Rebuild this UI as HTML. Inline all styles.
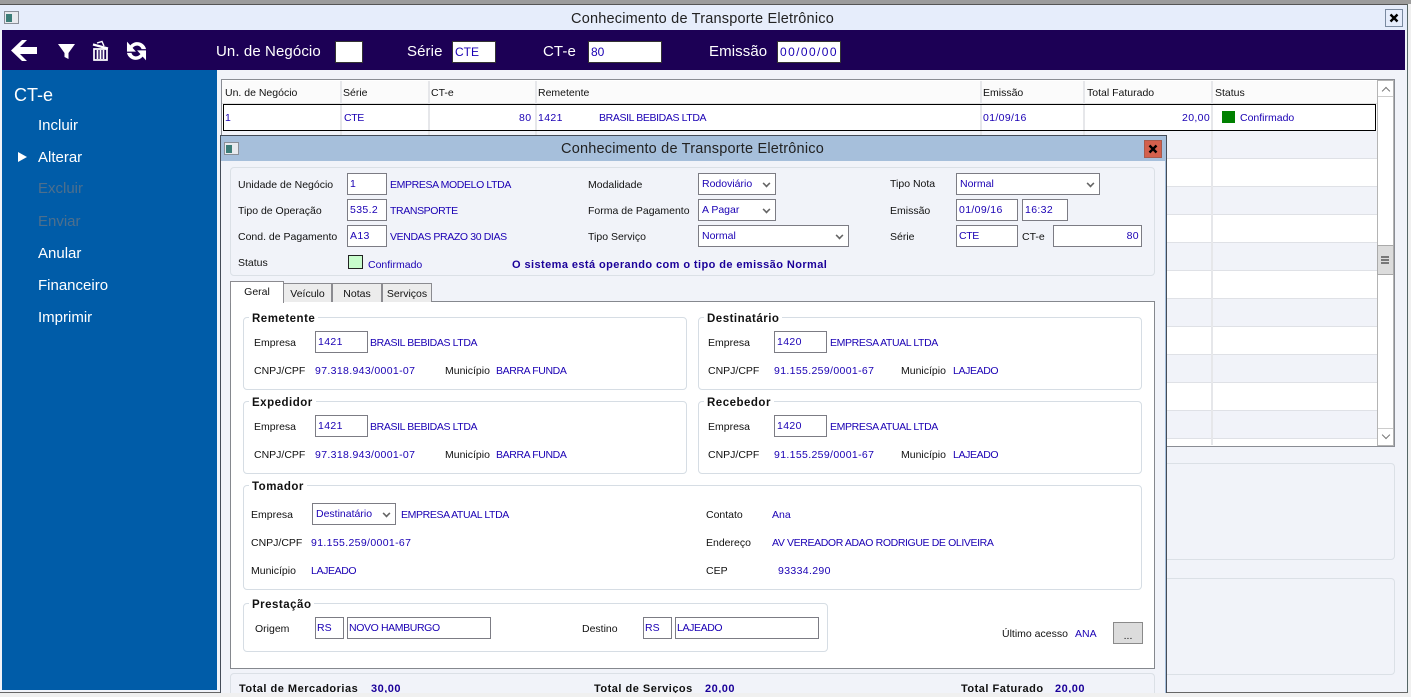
<!DOCTYPE html>
<html><head><meta charset="utf-8"><style>
html,body{margin:0;padding:0;width:1411px;height:697px;overflow:hidden;background:#f0f0f0;font-family:"Liberation Sans",sans-serif;font-size:10.500px;color:#111}
div,span{position:absolute;box-sizing:border-box}
.t{white-space:nowrap;line-height:14px;height:14px;margin-top:1px}
.b{color:#1a00b4}
.u{letter-spacing:-.38px}
.n{letter-spacing:.35px}
.h{font-weight:bold;color:#111;background:#fff;padding:0 3px;font-size:11.500px;letter-spacing:.5px}
.i{background:#fff;border:1px solid #7c7c84;color:#1a00b4;white-space:nowrap;line-height:21px;padding-left:2px}
.s:after{content:"";position:absolute;right:5px;top:6px;width:5px;height:5px;border-right:2px solid #666;border-bottom:2px solid #666;transform:rotate(45deg) scale(.8)}
.g{background:#fff;border:1px solid #d6dde4;border-radius:4px}
.r{left:222px;width:1155px;height:28px;border-bottom:1px solid #dfe1e6}
.c{top:81px;height:364px;width:2px;background:#e6e7ea}
.m{left:38px;font-size:15px;color:#fff;white-space:nowrap;line-height:18px;height:18px;margin-top:1px}
.tb{top:42px;font-size:15px;color:#fff;white-space:nowrap;line-height:20px;letter-spacing:.1px}
.ti{top:41px;height:22px;background:#fff;border:1px solid #333;color:#1a00b4;font-size:12px;line-height:20px;padding-left:2px}
.tab{background:#ececec;border:1px solid #8b8b90;border-bottom:0;text-align:center;line-height:21px}
.bd{font-weight:bold;letter-spacing:.5px;font-size:11px}
.bb{font-weight:bold;color:#1a0099;letter-spacing:.5px;font-size:11px}
</style></head><body>
<div style="left:0;top:0;width:1411px;height:4px;background:#9c9c9c"></div>
<div style="left:0;top:4px;width:1408px;height:1px;background:#555"></div>
<div style="left:0;top:5px;width:1407px;height:688px;background:#f1f3f9"></div>
<div style="left:0;top:5px;width:1407px;height:25px;background:#e6edfb"></div>
<div style="left:1407px;top:4px;width:1px;height:689px;background:#566"></div>
<div style="left:0;top:692px;width:1408px;height:1px;background:#666"></div>
<div style="left:4px;top:11px;width:15px;height:13px;background:#e8eaee;border:1px solid #8a8f98"></div>
<div style="left:6px;top:14px;width:6px;height:8px;background:#3c7d78"></div>
<div class="t" style="left:0;width:1405px;top:9px;height:18px;line-height:18px;text-align:center;font-size:14.500px;letter-spacing:.2px;color:#222">Conhecimento de Transporte Eletrônico</div>
<div style="left:1385px;top:9px;width:18px;height:18px;border:1px solid #7a8aa0;background:#e6edfb"></div>
<svg style="position:absolute;left:1385px;top:9px" width="18" height="18"><path d="M5.500 5.500L12.500 12.500M12.500 5.500L5.500 12.500" stroke="#000" stroke-width="2.400"/></svg>

<div style="left:2px;top:30px;width:1403px;height:40px;background:#1c0055"></div>
<svg style="position:absolute;left:0;top:30px" width="160" height="40" viewBox="0 0 160 40">
<path d="M11 20.500L22 10H27L20 17H37V24H20L27 31H22Z" fill="#fff"/>
<path d="M58 14H75L68.500 23V29L64.500 27V23Z" fill="#fff"/>
<path d="M93 14.500L108 18.500" stroke="#fff" stroke-width="2.200" fill="none"/>
<path d="M97 13L102 11.500L104 16" stroke="#fff" stroke-width="1.400" fill="none"/>
<path d="M94 19H107V30H94ZM97.500 20V29M100.500 20V29M103.500 20V29" stroke="#fff" stroke-width="1.700" fill="none"/>
<g transform="translate(136.500 21) scale(1.12 1.25) translate(-136.500 -21.500)"><path d="M145 20C144 15 136 12 131 17L128 14V22H136L133 19C136 16 140 17 141 20ZM128 23C129 28 137 31 142 26L145 29V21H137L140 24C137 27 133 26 132 23Z" fill="#fff"/></g>
</svg>
<div class="tb" style="left:216px">Un. de Negócio</div>
<div class="ti" style="left:335px;width:28px"></div>
<div class="tb" style="left:407px">Série</div>
<div class="ti" style="left:452px;width:44px">CTE</div>
<div class="tb" style="left:543px">CT-e</div>
<div class="ti" style="left:588px;width:74px">80</div>
<div class="tb" style="left:709px">Emissão</div>
<div class="ti" style="left:777px;width:64px;letter-spacing:1.400px">00/00/00</div>

<div style="left:2px;top:70px;width:215px;height:620px;background:#005ca8"></div>
<div class="m" style="left:14px;top:84px;font-size:18px;line-height:20px;height:20px">CT-e</div>
<div class="m" style="top:116px">Incluir</div>
<div style="left:18px;top:152px;width:0;height:0;border-left:9px solid #fff;border-top:5px solid transparent;border-bottom:5px solid transparent"></div>
<div class="m" style="top:148px">Alterar</div>
<div class="m" style="top:179px;color:#4d6f8d">Excluir</div>
<div class="m" style="top:212px;color:#4d6f8d">Enviar</div>
<div class="m" style="top:244px">Anular</div>
<div class="m" style="top:276px">Financeiro</div>
<div class="m" style="top:308px">Imprimir</div>

<!-- grid -->
<div style="left:221px;top:79px;width:1174px;height:368px;background:#fff;border:1px solid #8a8d94"></div>
<div style="left:222px;top:81px;width:1155px;height:23px;background:#fbfbfb;border-bottom:1px solid #e0e0e0"></div>
<div class="r" style="top:131px;background:#f1f3f9"></div>
<div class="r" style="top:159px"></div>
<div class="r" style="top:187px;background:#f1f3f9"></div>
<div class="r" style="top:215px"></div>
<div class="r" style="top:243px;background:#f1f3f9"></div>
<div class="r" style="top:271px"></div>
<div class="r" style="top:299px;background:#f1f3f9"></div>
<div class="r" style="top:327px"></div>
<div class="r" style="top:355px;background:#f1f3f9"></div>
<div class="r" style="top:383px"></div>
<div class="r" style="top:411px;background:#f1f3f9"></div>
<div class="c" style="left:340px"></div><div class="c" style="left:428px"></div><div class="c" style="left:535px"></div><div class="c" style="left:980px"></div><div class="c" style="left:1083px"></div><div class="c" style="left:1211px"></div>
<div class="t" style="left:225px;top:85px">Un. de Negócio</div>
<div class="t" style="left:343px;top:85px">Série</div>
<div class="t" style="left:431px;top:85px">CT-e</div>
<div class="t" style="left:538px;top:85px">Remetente</div>
<div class="t" style="left:983px;top:85px">Emissão</div>
<div class="t" style="left:1087px;top:85px">Total Faturado</div>
<div class="t" style="left:1215px;top:85px">Status</div>
<div style="left:223px;top:104px;width:1153px;height:27px;background:#fff;border:1px solid #000"></div>
<div class="c" style="left:340px;top:105px;height:25px"></div><div class="c" style="left:428px;top:105px;height:25px"></div><div class="c" style="left:535px;top:105px;height:25px"></div><div class="c" style="left:980px;top:105px;height:25px"></div><div class="c" style="left:1083px;top:105px;height:25px"></div><div class="c" style="left:1211px;top:105px;height:25px"></div>
<div class="t b" style="left:225px;top:110px">1</div>
<div class="t b u" style="left:344px;top:110px">CTE</div>
<div class="t b n" style="left:519px;top:110px">80</div>
<div class="t b n" style="left:538px;top:110px">1421</div>
<div class="t b u" style="left:599px;top:110px">BRASIL BEBIDAS LTDA</div>
<div class="t b n" style="left:983px;top:110px">01/09/16</div>
<div class="t b n" style="left:1182px;top:110px">20,00</div>
<div style="left:1222px;top:111px;width:13px;height:12px;background:#008000"></div>
<div class="t b" style="left:1240px;top:110px">Confirmado</div>
<!-- scrollbar -->
<div style="left:1377px;top:80px;width:17px;height:366px;background:#fff;border:1px solid #b4b4b4"></div>
<div style="left:1378px;top:81px;width:15px;height:16px;background:#fff;border-bottom:1px solid #ccc"></div>
<div style="left:1383px;top:88px;width:6px;height:6px;border-left:1.500px solid #777;border-top:1.500px solid #777;transform:rotate(45deg)"></div>
<div style="left:1377px;top:245px;width:17px;height:30px;background:#dcdcdc;border:1px solid #aaa"></div>
<div style="left:1381px;top:256px;width:8px;height:8px;border-top:2px solid #777;border-bottom:2px solid #777"></div>
<div style="left:1381px;top:259px;width:8px;height:2px;background:#777"></div>
<div style="left:1378px;top:428px;width:15px;height:17px;background:#fff;border-top:1px solid #ccc"></div>
<div style="left:1383px;top:432px;width:6px;height:6px;border-right:1.500px solid #777;border-bottom:1.500px solid #777;transform:rotate(45deg)"></div>

<div style="left:1160px;top:463px;width:235px;height:97px;border:1px solid #dbe0e6;border-radius:4px;background:#f1f3f9"></div>
<div style="left:1160px;top:578px;width:235px;height:97px;border:1px solid #dbe0e6;border-radius:4px;background:#f1f3f9"></div>

<!-- dialog -->
<div style="left:220px;top:135px;width:947px;height:558px;background:#f1f3f9;border:1px solid #444c58;border-bottom:0"></div>
<div style="left:221px;top:136px;width:945px;height:25px;background:#a6bfdb"></div>
<div style="left:1165px;top:161px;width:1px;height:532px;background:#a6bfdb"></div>
<div style="left:224px;top:142px;width:15px;height:13px;background:#e8eaee;border:1px solid #8a8f98"></div>
<div style="left:226px;top:145px;width:6px;height:8px;background:#3c7d78"></div>
<div class="t" style="left:222px;width:941px;top:139px;height:18px;line-height:18px;text-align:center;font-size:14.500px;letter-spacing:.2px;color:#222">Conhecimento de Transporte Eletrônico</div>
<div style="left:1144px;top:140px;width:18px;height:18px;background:#d3604c;border:1px solid #a85a4c"></div>
<svg style="position:absolute;left:1144px;top:140px" width="18" height="18"><path d="M5.500 5.500L12.500 12.500M12.500 5.500L5.500 12.500" stroke="#000" stroke-width="2.400"/></svg>

<div style="left:230px;top:167px;width:925px;height:109px;border:1px solid #dbe0e6;border-radius:4px"></div>
<div class="t" style="left:238px;top:177px">Unidade de Negócio</div>
<div class="i" style="left:347px;top:173px;width:40px;height:22px">1</div>
<div class="t b u" style="left:390px;top:177px">EMPRESA MODELO LTDA</div>
<div class="t" style="left:238px;top:203px">Tipo de Operação</div>
<div class="i n" style="left:347px;top:199px;width:40px;height:22px">535.2</div>
<div class="t b u" style="left:390px;top:203px">TRANSPORTE</div>
<div class="t" style="left:238px;top:229px">Cond. de Pagamento</div>
<div class="i n" style="left:347px;top:225px;width:40px;height:22px">A13</div>
<div class="t b u" style="left:390px;top:229px">VENDAS PRAZO 30 DIAS</div>
<div class="t" style="left:238px;top:255px">Status</div>
<div style="left:348px;top:255px;width:15px;height:14px;background:#c8fccc;border:1px solid #222"></div>
<div class="t b" style="left:368px;top:257px">Confirmado</div>
<div class="t bb" style="left:512px;top:257px;font-size:11px;letter-spacing:.42px">O sistema está operando com o tipo de emissão Normal</div>

<div class="t" style="left:588px;top:177px">Modalidade</div>
<div class="i s" style="left:698px;top:173px;width:78px;height:22px;padding-left:3px">Rodoviário</div>
<div class="t" style="left:588px;top:203px">Forma de Pagamento</div>
<div class="i s" style="left:698px;top:199px;width:78px;height:22px;padding-left:3px">A Pagar</div>
<div class="t" style="left:588px;top:229px">Tipo Serviço</div>
<div class="i s" style="left:698px;top:225px;width:151px;height:22px;padding-left:3px">Normal</div>

<div class="t" style="left:890px;top:176px">Tipo Nota</div>
<div class="i s" style="left:956px;top:173px;width:144px;height:22px;padding-left:3px">Normal</div>
<div class="t" style="left:890px;top:203px">Emissão</div>
<div class="i n" style="left:956px;top:199px;width:62px;height:22px">01/09/16</div>
<div class="i n" style="left:1022px;top:199px;width:46px;height:22px">16:32</div>
<div class="t" style="left:890px;top:229px">Série</div>
<div class="i u" style="left:956px;top:225px;width:62px;height:22px">CTE</div>
<div class="t" style="left:1022px;top:229px">CT-e</div>
<div class="i n" style="left:1053px;top:225px;width:89px;height:22px;text-align:right;padding-right:2px">80</div>

<!-- tabs -->
<div style="left:230px;top:301px;width:925px;height:368px;background:#fff;border:1px solid #85888e"></div>
<div class="tab" style="left:283px;top:283px;width:49px;height:19px">Veículo</div>
<div class="tab" style="left:332px;top:283px;width:50px;height:19px">Notas</div>
<div class="tab" style="left:382px;top:283px;width:50px;height:19px">Serviços</div>
<div class="tab" style="left:230px;top:281px;width:54px;height:22px;background:#fff">Geral</div>

<!-- Remetente -->
<div class="g" style="left:243px;top:317px;width:444px;height:73px"></div>
<div class="t h" style="left:249px;top:311px">Remetente</div>
<div class="t" style="left:254px;top:335px">Empresa</div>
<div class="i n" style="left:315px;top:331px;width:53px;height:22px">1421</div>
<div class="t b u" style="left:370px;top:335px">BRASIL BEBIDAS LTDA</div>
<div class="t" style="left:254px;top:363px">CNPJ/CPF</div>
<div class="t b n" style="left:315px;top:363px">97.318.943/0001-07</div>
<div class="t" style="left:445px;top:363px">Município</div>
<div class="t b u" style="left:496px;top:363px">BARRA FUNDA</div>

<!-- Destinatario -->
<div class="g" style="left:698px;top:317px;width:444px;height:73px"></div>
<div class="t h" style="left:704px;top:311px">Destinatário</div>
<div class="t" style="left:708px;top:335px">Empresa</div>
<div class="i n" style="left:774px;top:331px;width:53px;height:22px">1420</div>
<div class="t b u" style="left:830px;top:335px">EMPRESA ATUAL LTDA</div>
<div class="t" style="left:708px;top:363px">CNPJ/CPF</div>
<div class="t b n" style="left:774px;top:363px">91.155.259/0001-67</div>
<div class="t" style="left:901px;top:363px">Município</div>
<div class="t b u" style="left:953px;top:363px">LAJEADO</div>

<!-- Expedidor -->
<div class="g" style="left:243px;top:401px;width:444px;height:73px"></div>
<div class="t h" style="left:249px;top:395px">Expedidor</div>
<div class="t" style="left:254px;top:419px">Empresa</div>
<div class="i n" style="left:315px;top:415px;width:53px;height:22px">1421</div>
<div class="t b u" style="left:370px;top:419px">BRASIL BEBIDAS LTDA</div>
<div class="t" style="left:254px;top:447px">CNPJ/CPF</div>
<div class="t b n" style="left:315px;top:447px">97.318.943/0001-07</div>
<div class="t" style="left:445px;top:447px">Município</div>
<div class="t b u" style="left:496px;top:447px">BARRA FUNDA</div>

<!-- Recebedor -->
<div class="g" style="left:698px;top:401px;width:444px;height:73px"></div>
<div class="t h" style="left:704px;top:395px">Recebedor</div>
<div class="t" style="left:708px;top:419px">Empresa</div>
<div class="i n" style="left:774px;top:415px;width:53px;height:22px">1420</div>
<div class="t b u" style="left:830px;top:419px">EMPRESA ATUAL LTDA</div>
<div class="t" style="left:708px;top:447px">CNPJ/CPF</div>
<div class="t b n" style="left:774px;top:447px">91.155.259/0001-67</div>
<div class="t" style="left:901px;top:447px">Município</div>
<div class="t b u" style="left:953px;top:447px">LAJEADO</div>

<!-- Tomador -->
<div class="g" style="left:243px;top:485px;width:899px;height:105px"></div>
<div class="t h" style="left:249px;top:479px">Tomador</div>
<div class="t" style="left:251px;top:507px">Empresa</div>
<div class="i s" style="left:312px;top:503px;width:84px;height:22px;padding-left:3px">Destinatário</div>
<div class="t b u" style="left:401px;top:507px">EMPRESA ATUAL LTDA</div>
<div class="t" style="left:251px;top:535px">CNPJ/CPF</div>
<div class="t b n" style="left:311px;top:535px">91.155.259/0001-67</div>
<div class="t" style="left:251px;top:563px">Município</div>
<div class="t b u" style="left:311px;top:563px">LAJEADO</div>
<div class="t" style="left:706px;top:507px">Contato</div>
<div class="t b" style="left:772px;top:507px">Ana</div>
<div class="t" style="left:706px;top:535px">Endereço</div>
<div class="t b u" style="left:772px;top:535px">AV VEREADOR ADAO RODRIGUE DE OLIVEIRA</div>
<div class="t" style="left:706px;top:563px">CEP</div>
<div class="t b n" style="left:778px;top:563px">93334.290</div>

<!-- Prestacao -->
<div class="g" style="left:243px;top:603px;width:585px;height:49px"></div>
<div class="t h" style="left:249px;top:597px">Prestação</div>
<div class="t" style="left:255px;top:621px">Origem</div>
<div class="i" style="left:315px;top:617px;width:29px;height:22px;padding-left:1px">RS</div>
<div class="i u" style="left:347px;top:617px;width:144px;height:22px;padding-left:1px">NOVO HAMBURGO</div>
<div class="t" style="left:582px;top:621px">Destino</div>
<div class="i" style="left:643px;top:617px;width:29px;height:22px;padding-left:1px">RS</div>
<div class="i u" style="left:675px;top:617px;width:144px;height:22px;padding-left:1px">LAJEADO</div>
<div class="t" style="left:1002px;top:626px">Último acesso</div>
<div class="t b" style="left:1075px;top:626px">ANA</div>
<div style="left:1113px;top:622px;width:30px;height:22px;background:#dcdcdc;border:1px solid #8a8a8a;text-align:center;line-height:27px;color:#111">...</div>

<!-- totals -->
<div style="left:230px;top:673px;width:925px;height:20px;border:1px solid #dbe0e6;border-bottom:0;border-radius:4px 4px 0 0"></div>
<div class="t bd" style="left:239px;top:681px">Total de Mercadorias</div>
<div class="t bb" style="left:371px;top:681px">30,00</div>
<div class="t bd" style="left:594px;top:681px">Total de Serviços</div>
<div class="t bb" style="left:705px;top:681px">20,00</div>
<div class="t bd" style="left:961px;top:681px">Total Faturado</div>
<div class="t bb" style="left:1055px;top:681px">20,00</div>
<div style="left:0;top:693px;width:1411px;height:4px;background:#f0f0f0"></div>
</body></html>
